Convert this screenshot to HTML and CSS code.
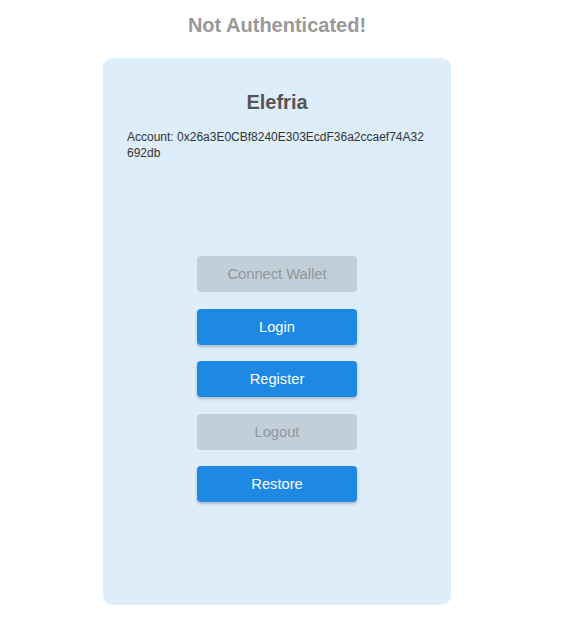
FILE: index.html
```html
<!DOCTYPE html>
<html>
<head>
<meta charset="utf-8">
<link rel="stylesheet" href="styles.css">
</head>
<body>
<div class="page">
  <h1 class="status">Not Authenticated!</h1>
  <div class="card">
    <h2 class="name">Elefria</h2>
    <p class="account">Account: 0x26a3E0CBf8240E303EcdF36a2ccaef74A32692db</p>
    <div class="actions">
      <button class="btn" disabled>Connect Wallet</button>
      <button class="btn primary">Login</button>
      <button class="btn primary">Register</button>
      <button class="btn" disabled>Logout</button>
      <button class="btn primary">Restore</button>
    </div>
  </div>
</div>
</body>
</html>
```
FILE: styles.css
```css
* { box-sizing: border-box; }
body {
  margin: 0;
  background: #fff;
  font-family: "Liberation Sans", Arial, sans-serif;
}
.page {
  width: 554px;
  display: flex;
  flex-direction: column;
  align-items: center;
}
.status {
  margin: 14px 0 0;
  font-size: 20px;
  line-height: 23px;
  font-weight: bold;
  color: #999999;
}
.card {
  margin-top: 21px;
  width: 348px;
  height: 547px;
  background: #deedfa;
  border-radius: 10px;
  padding: 0 24px;
  display: flex;
  flex-direction: column;
}
.name {
  margin: 33px 0 0;
  font-size: 20px;
  line-height: 23px;
  font-weight: bold;
  color: #555555;
  text-align: center;
}
.account {
  margin: 15px 0 0;
  font-size: 12px;
  line-height: 16px;
  color: #333333;
  word-break: break-all;
}
.actions {
  margin-top: 95px;
  display: flex;
  flex-direction: column;
  align-items: center;
  gap: 16.5px;
}
.btn {
  width: 160px;
  height: 36px;
  border: none;
  border-radius: 4px;
  font-family: "Liberation Sans", Arial, sans-serif;
  font-size: 14.7px;
  background: #c2ced8;
  color: #8f979f;
}
.btn.primary {
  background: #1e88e5;
  color: #ffffff;
  box-shadow: 0 2px 3px rgba(0, 0, 0, 0.22);
}
```
